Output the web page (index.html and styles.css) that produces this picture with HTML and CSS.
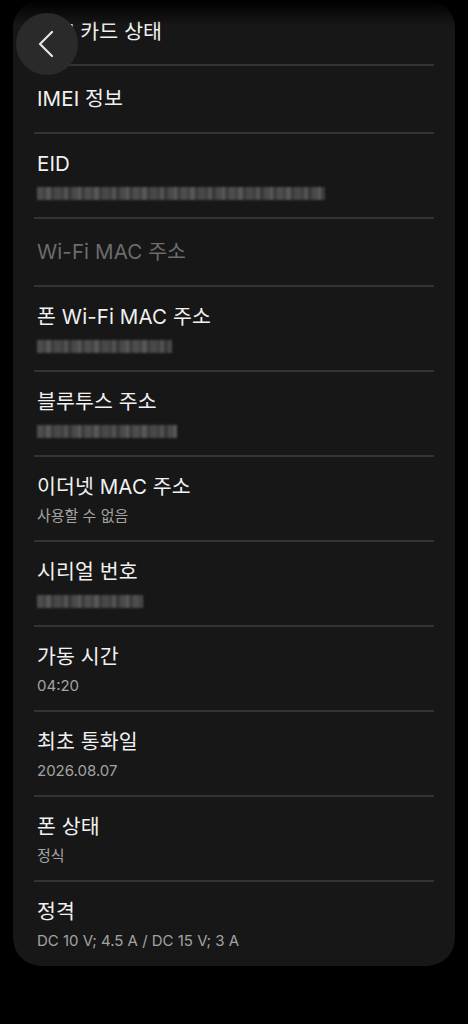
FILE: index.html
```html
<!DOCTYPE html>
<html lang="ko">
<head>
<meta charset="utf-8">
<link rel="stylesheet" href="styles.css">
</head>
<body>
<div class="screen">
  <div class="card">
    <ul class="list">
      <li class="item single first"><div class="title">SIM 카드 상태</div></li>
      <li class="item single"><div class="title">IMEI 정보</div></li>
      <li class="item"><div class="title">EID</div><div class="sub"><span class="mask m-eid"></span></div></li>
      <li class="item single"><div class="title disabled">Wi-Fi MAC 주소</div></li>
      <li class="item"><div class="title">폰 Wi-Fi MAC 주소</div><div class="sub"><span class="mask m-wifi"></span></div></li>
      <li class="item"><div class="title">블루투스 주소</div><div class="sub"><span class="mask m-bt"></span></div></li>
      <li class="item"><div class="title">이더넷 MAC 주소</div><div class="sub">사용할 수 없음</div></li>
      <li class="item"><div class="title">시리얼 번호</div><div class="sub"><span class="mask m-serial"></span></div></li>
      <li class="item"><div class="title">가동 시간</div><div class="sub">04:20</div></li>
      <li class="item"><div class="title">최초 통화일</div><div class="sub">2026.08.07</div></li>
      <li class="item"><div class="title">폰 상태</div><div class="sub">정식</div></li>
      <li class="item last"><div class="title">정격</div><div class="sub">DC 10 V; 4.5 A / DC 15 V; 3 A</div></li>
    </ul>
  </div>
  <div class="top-fade"></div>
  <button class="back" aria-label="뒤로">
    <svg width="62" height="62" viewBox="0 0 62 62"><path d="M36 19 L24 31 L36 43" fill="none" stroke="#e6e6e6" stroke-width="2.2" stroke-linecap="round" stroke-linejoin="round"/></svg>
  </button>
</div>
</body>
</html>
```

FILE: styles.css
```css
html, body {
  margin: 0;
  padding: 0;
  background: #000;
}
body {
  width: 468px;
  height: 1024px;
  overflow: hidden;
  font-family: "Inter", "Noto Sans CJK KR", sans-serif;
}
.screen {
  position: relative;
  width: 468px;
  height: 1024px;
  background: #000;
}
.card {
  margin: 0 13px;
  background: #171717;
  border-radius: 28px;
  padding: 0 21px;
}
.list {
  list-style: none;
  margin: 0;
  padding: 0;
}
.item {
  border-top: 2px solid #333333;
  padding: 15px 3px 13px;
}
.item.single {
  padding: 18px 3px 18px;
}
.item.first {
  border-top: none;
  padding: 17px 3px 17px;
}
.item.last {
  padding-bottom: 14px;
}
.title {
  font-size: 20.5px;
  line-height: 30px;
  color: #f1f1f1;
  letter-spacing: 0.1px;
}
.title.disabled {
  color: #6c6c6c;
}
.sub {
  margin-top: 3px;
  font-size: 15px;
  line-height: 22px;
  color: #a3a3a3;
  height: 22px;
  display: flex;
  align-items: center;
}
.mask {
  display: block;
  height: 13px;
  filter: blur(1.2px);
  background:
    repeating-linear-gradient(90deg,
      #4d4d4d 0 6px, #414141 6px 9px, #575757 9px 14px, #3a3a3a 14px 17px,
      #484848 17px 24px, #3f3f3f 24px 27px, #525252 27px 31px, #383838 31px 35px,
      #4a4a4a 35px 41px, #5a5a5a 41px 44px, #3d3d3d 44px 48px);
}
.m-eid { width: 288px; }
.m-wifi { width: 135px; }
.m-bt { width: 140px; }
.m-serial { width: 106px; }
.top-fade {
  position: absolute;
  left: 0;
  top: 0;
  width: 468px;
  height: 26px;
  background: linear-gradient(#000 0%, rgba(0,0,0,0.55) 45%, rgba(0,0,0,0) 100%);
  pointer-events: none;
}
.back {
  position: absolute;
  left: 16px;
  top: 13px;
  width: 62px;
  height: 62px;
  border: none;
  border-radius: 50%;
  background: #2a2a2a;
  padding: 0;
  display: flex;
  align-items: center;
  justify-content: center;
}
.back svg {
  display: block;
}
```
